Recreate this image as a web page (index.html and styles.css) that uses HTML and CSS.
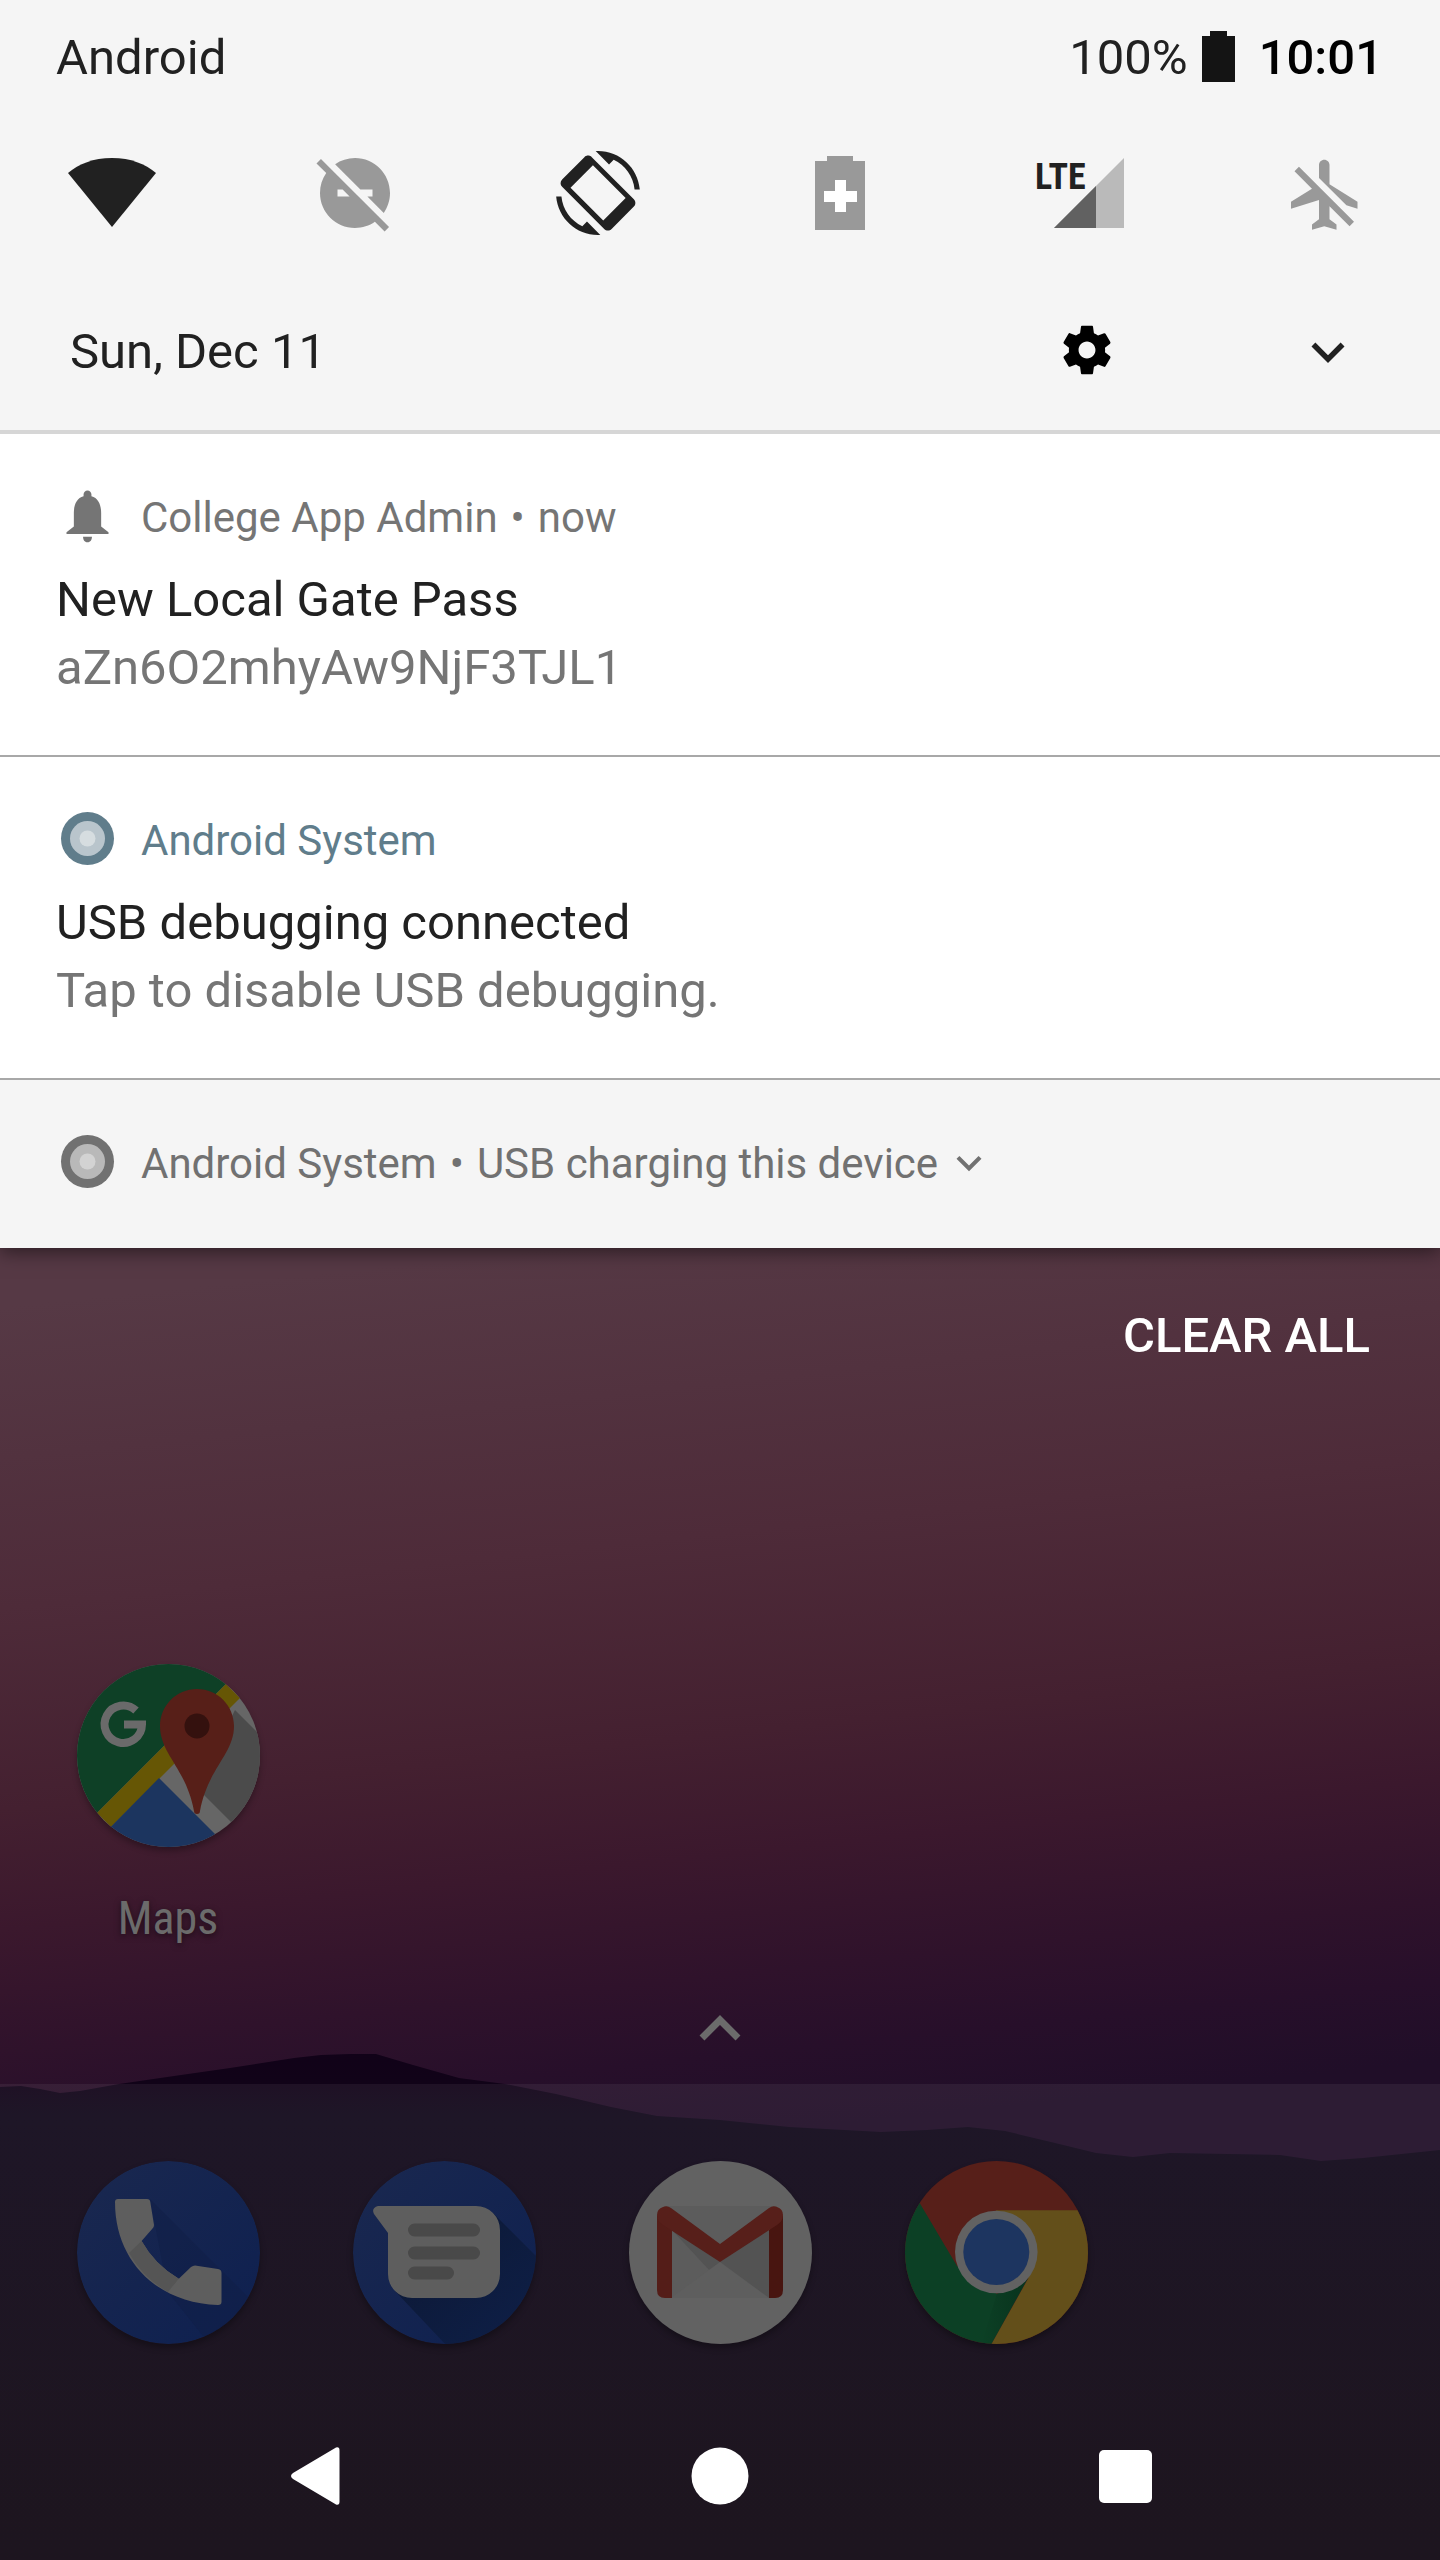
FILE: index.html
```html
<!DOCTYPE html>
<html lang="en">
<head>
<meta charset="utf-8">
<meta name="viewport" content="width=device-width, initial-scale=1">
<title>Notification shade</title>
<link rel="stylesheet" href="styles.css">
</head>
<body>
<div class="screen">
  <header class="shade-header">
    <div class="status-bar">
      <span class="carrier">Android</span>
      <div class="status-right">
        <span>100%</span>
        <svg class="battery" viewBox="0 0 33 51" aria-hidden="true"><path d="M8 0h17v5h8v46H0V5h8z"/></svg>
        <time class="clock">10:01</time>
      </div>
    </div>
    <div class="tiles">
      <button class="tile" aria-label="Wi-Fi"><svg viewBox="0 0 84 84"><path d="M42 76L-2 22C9 13 23 7 42 7s33 6 44 15z"/></svg></button>
      <button class="tile off" aria-label="Do not disturb"><svg viewBox="0 0 24 24"><path d="M17 11v2h-1.46l4.68 4.68C21.34 16.07 22 14.11 22 12c0-5.52-4.48-10-10-10-2.11 0-4.07.66-5.68 1.78L13.54 11H17zM2.27 2.27L1 3.54l2.78 2.78C2.66 7.93 2 9.89 2 12c0 5.52 4.48 10 10 10 2.11 0 4.07-.66 5.68-1.78L20.46 23l1.27-1.27L2.27 2.27zM7 13v-2h1.46l2 2H7z"/></svg></button>
      <button class="tile" aria-label="Auto-rotate"><svg viewBox="0 0 24 24"><path fill-rule="evenodd" d="M16.48 2.52c3.27 1.55 5.61 4.72 5.97 8.48h1.5C23.44 4.84 18.29 0 12 0l-.66.03 3.81 3.81 1.33-1.32zM10.23 1.75c-.59-.59-1.54-.59-2.12 0L1.75 8.11c-.59.59-.59 1.54 0 2.12l12.02 12.02c.59.59 1.54.59 2.12 0l6.36-6.36c.59-.59.59-1.54 0-2.12L10.23 1.75zM13.5 19.85L4.15 10.5l6.4-6.4 9.35 9.35-6.4 6.4zM7.52 21.48C4.25 19.94 1.91 16.76 1.55 13H.05C.56 19.16 5.71 24 12 24l.66-.03-3.81-3.81-1.33 1.32z"/></svg></button>
      <button class="tile off" aria-label="Battery saver"><svg viewBox="0 0 84 84"><path d="M29 5h26v5h12v69H17V10h12z"/><path class="plus" d="M37 29h11v11h11v11H48v10H37V51H26V40h11z"/></svg></button>
      <button class="tile" aria-label="Mobile data"><svg viewBox="0 0 84 84"><path class="signal-back" d="M83 7v70H13z"/><path class="signal" d="M55 35v42H13z"/><text class="lte" x="-6" y="38">LTE</text></svg></button>
      <button class="tile off" aria-label="Airplane mode"><svg viewBox="0 0 24 23"><path d="M13 9V3.5c0-.83-.67-1.5-1.5-1.5S10 2.67 10 3.5v3.68l7.83 7.83L21 16v-2l-8-5zM3 5.27l4.99 4.99L2 14v2l8-2.5V19l-2 1.5V22l3.5-1 3.5 1v-1.5L13 19v-3.73L18.73 21 20 19.73 4.27 4 3 5.27z"/></svg></button>
    </div>
    <div class="date-row">
      <time>Sun, Dec 11</time>
      <div class="date-actions">
        <button class="settings" aria-label="Settings"><svg viewBox="0 0 24 24"><path d="M19.43 12.98c.04-.32.07-.64.07-.98s-.03-.66-.07-.98l2.11-1.65c.19-.15.24-.42.12-.64l-2-3.46c-.12-.22-.39-.3-.61-.22l-2.49 1c-.52-.4-1.08-.73-1.69-.98l-.38-2.65C14.46 2.18 14.25 2 14 2h-4c-.25 0-.46.18-.49.42l-.38 2.65c-.61.25-1.17.59-1.69.98l-2.49-1c-.23-.09-.49 0-.61.22l-2 3.46c-.13.22-.07.49.12.64l2.11 1.65c-.04.32-.07.65-.07.98s.03.66.07.98l-2.11 1.65c-.19.15-.24.42-.12.64l2 3.46c.12.22.39.3.61.22l2.49-1c.52.4 1.08.73 1.69.98l.38 2.65c.03.24.24.42.49.42h4c.25 0 .46-.18.49-.42l.38-2.65c.61-.25 1.17-.59 1.69-.98l2.49 1c.23.09.49 0 .61-.22l2-3.46c.12-.22.07-.49-.12-.64l-2.11-1.65zM12 15.5c-1.93 0-3.5-1.57-3.5-3.5s1.57-3.5 3.5-3.5 3.5 1.57 3.5 3.5-1.57 3.5-3.5 3.5z"/></svg></button>
        <button class="expand" aria-label="Expand quick settings"><svg viewBox="0 0 24 24"><path d="M16.59 8.59L12 13.17 7.41 8.59 6 10l6 6 6-6z"/></svg></button>
      </div>
    </div>
  </header>

  <main class="notifications">
    <article class="notification">
      <div class="note-head">
        <svg class="note-icon" viewBox="0 0 24 24" aria-hidden="true"><path d="M12 22.2c1.2 0 1.6-.9 1.7-2.1h-3.4c.1 1.2.5 2.1 1.7 2.1zM17.2 16.2V11c0-3.07-1.1-5.64-3.7-6.32V4c0-.83-.67-1.5-1.5-1.5s-1.5.67-1.5 1.5v.68C7.9 5.36 6.8 7.92 6.8 11v5.2L4 18.4V19h16v-.6z"/></svg>
        <span>College App Admin</span><span class="dot">•</span><span>now</span>
      </div>
      <h2>New Local Gate Pass</h2>
      <p>aZn6O2mhyAw9NjF3TJL1</p>
    </article>
    <article class="notification system">
      <div class="note-head">
        <svg class="note-icon" viewBox="0 0 63 63" aria-hidden="true"><circle cx="31.5" cy="31.5" r="26.5"/><circle class="ring" cx="31.5" cy="31.5" r="17.5"/><circle class="core" cx="31.5" cy="31.5" r="8"/></svg>
        <span>Android System</span>
      </div>
      <h2>USB debugging connected</h2>
      <p>Tap to disable USB debugging.</p>
    </article>
    <article class="notification quiet">
      <div class="note-head">
        <svg class="note-icon" viewBox="0 0 63 63" aria-hidden="true"><circle cx="31.5" cy="31.5" r="26.5"/><circle class="ring" cx="31.5" cy="31.5" r="17.5"/><circle class="core" cx="31.5" cy="31.5" r="8"/></svg>
        <span>Android System</span><span class="dot">•</span><span>USB charging this device</span>
        <button class="more" aria-label="Expand notification"><svg viewBox="0 0 24 24"><path d="M16.59 8.59L12 13.17 7.41 8.59 6 10l6 6 6-6z"/></svg></button>
      </div>
    </article>
  </main>

  <div class="clear-row"><button class="clear-all">CLEAR ALL</button></div>

  <section class="workspace">
    <a class="app" href="#maps">
      <svg class="app-icon" viewBox="0 0 183 183" aria-hidden="true">
        <clipPath id="disc"><circle cx="91.5" cy="91.5" r="91.5"/></clipPath>
        <g clip-path="url(#disc)">
          <rect width="183" height="183" fill="#666"/>
          <path fill="#0e4026" d="M0 0h169L0 169z"/>
          <path fill="#4b4b4b" d="M158 46l30 30v116L120 124z"/>
          <path fill="#665605" d="M149 20l14 14L34 163l-14-14z"/>
          <path fill="#1c355f" d="M82 114l70 70H13z"/>
          <path fill="#571f18" d="M120 25c-21 0-37 17-37 37 0 28 26 42 34 85q0 3 3 3t3-3c8-43 34-57 34-85 0-20-16-37-37-37z"/>
          <circle cx="120" cy="62" r="12.5" fill="#34110e"/>
          <path fill="none" stroke="#6a6a6a" stroke-width="8" d="M59 46.500A18.700 18.700 0 1 0 65 60.500H47"/>
        </g>
      </svg>
      <span class="app-label">Maps</span>
    </a>
  </section>
  <svg class="drawer-handle" viewBox="0 0 48 48" aria-hidden="true"><path d="M6 34l18-18 18 18"/></svg>

  <footer class="bottom">
    <svg class="ridge" viewBox="0 0 1440 507" preserveAspectRatio="none" aria-hidden="true">
      <defs><linearGradient id="slope" x1="0" y1="0" x2="0" y2="1"><stop offset="0" stop-color="#110218"/><stop offset=".06" stop-color="#110318"/><stop offset=".12" stop-color="#10081a"/><stop offset="1" stop-color="#0f0711"/></linearGradient></defs>
      <path fill="url(#slope)" d="M0 34L21 33 40 36 60 40 80 38 119 31 174 23 230 15 294 5 321 2 350 1 376 1 413 12 459 25 505 31 556 41 611 54 657 63 720 67 789 74 881 79 927 77 968 74 1005 78 1055 90 1096 100 1133 104 1170 100 1280 102 1321 108 1363 105 1440 97V507H0z"/>
    </svg>
    <div class="dock">
      <a class="app" href="#phone" aria-label="Phone">
        <svg class="app-icon" viewBox="0 0 183 183" aria-hidden="true">
          <defs><linearGradient id="blue" x1="0" y1="0" x2="1" y2="1"><stop offset="0" stop-color="#1a284f"/><stop offset="1" stop-color="#0e2050"/></linearGradient>
          <linearGradient id="cast" x1="0" y1="0" x2="1" y2="1"><stop offset=".3" stop-color="#0b1835"/><stop offset="1" stop-color="#0f2049"/></linearGradient></defs>
          <g clip-path="url(#disc)">
            <circle cx="91.5" cy="91.5" r="91.5" fill="url(#blue)"/>
            <path fill="#0f1e45" opacity=".5" d="M73 38L200 165v40h-50L91 131z"/>
            <path fill="#5e5e5e" d="M41 38h29q3 0 3.300 3L77 64q0 2-1.500 3.500L64.600 80Q78 104 101.800 117.700L114 106q2-1.500 4-1.500l23 3.500q3.500.5 3.500 4v29q0 3-3.500 3C80 142 38 100 38 41q0-3 3-3z"/>
            <path fill="#555" d="M64.600 80Q78 104 101.800 117.700L91 131Q66 117 52 92z"/>
          </g>
        </svg>
      </a>
      <a class="app" href="#messages" aria-label="Messages">
        <svg class="app-icon" viewBox="0 0 183 183" aria-hidden="true">
          <g clip-path="url(#disc)">
            <circle cx="91.5" cy="91.5" r="91.5" fill="url(#blue)"/>
            <path fill="url(#cast)" opacity=".8" d="M140 52l60 60v90h-90L42 130z"/>
            <path fill="#5e5e5e" d="M25 45h98a24 24 0 0 1 24 24v44a24 24 0 0 1-24 24H59a24 24 0 0 1-24-24V72L21 53q-3-6 4-8z"/>
            <path stroke="#494949" stroke-width="13" stroke-linecap="round" d="M61.500 69H120.500M61.500 92H120.500M61.500 112H94.500"/>
          </g>
        </svg>
      </a>
      <a class="app" href="#gmail" aria-label="Gmail">
        <svg class="app-icon" viewBox="0 0 183 183" aria-hidden="true">
          <circle cx="91.5" cy="91.5" r="91.5" fill="#626262"/>
          <path fill="#5c5c5c" d="M35 45h113v92H35z"/>
          <path fill="#535353" d="M42 68l49 33 49-33v69h-34z"/>
          <path fill="#5e5e5e" d="M42 137l38-28 11-8 49 36z"/>
          <path fill="#541d18" d="M28 54v75q0 8 8 8h7V69z"/>
          <path fill="#481510" d="M154 54v75q0 8-8 8h-6V69z"/>
          <path fill="#571f1a" d="M42 47L91 83l49-36q4-3 8-1 6 2 6 8 0 6-6 10L91 101 34 64q-6-4-6-10 0-6 6-8 4-2 8 1z"/>
        </svg>
      </a>
      <a class="app" href="#chrome" aria-label="Chrome">
        <svg class="app-icon" viewBox="0 0 183 183" aria-hidden="true">
          <defs><linearGradient id="fold" x1="0" y1="0" x2="1" y2="0"><stop offset="0" stop-color="#08331d" stop-opacity="0"/><stop offset="1" stop-color="#08331d"/></linearGradient></defs>
          <g clip-path="url(#disc)">
            <rect width="183" height="183" fill="#571f19"/>
            <path fill="#0c4025" d="M14.500 41.700L52 105l40 28 31-16-36.500 66H-10V20z"/>
            <path fill="#634f1a" d="M91 49.300h92V183H86.500l37-66z"/>
            <path fill="url(#fold)" d="M92 132l31-15-36.500 66h-10z"/>
          </g>
          <circle cx="91.300" cy="91" r="41.300" fill="#626262"/>
          <circle cx="91.300" cy="91" r="33" fill="#1d3560"/>
        </svg>
      </a>
    </div>
    <nav class="nav-bar">
      <button aria-label="Back"><svg viewBox="0 0 58 58"><path d="M50 .5q3.500-1 3.500 3v51q0 4-3.500 3L7 32q-4-3 0-6z"/></svg></button>
      <button aria-label="Home"><svg viewBox="0 0 58 58"><circle cx="29" cy="29" r="28.5"/></svg></button>
      <button aria-label="Recent apps"><svg viewBox="0 0 58 58"><rect x="3" y="3" width="53" height="53" rx="5"/></svg></button>
    </nav>
  </footer>
</div>
</body>
</html>
```
FILE: styles.css
```css
* { box-sizing: border-box; }
body { margin: 0; font-family: Roboto, sans-serif; font-size: 49px; line-height: 60px; color: #212121; }
button { display: block; padding: 0; border: 0; background: none; color: inherit; font: inherit; cursor: pointer; }
a { color: inherit; text-decoration: none; }
svg { display: block; overflow: visible; }
h2, p { margin: 0; font-size: 49px; font-weight: 400; line-height: 68px; }

.screen {
  display: flex;
  flex-direction: column;
  min-height: 100vh;
  background: linear-gradient(174deg, #563945 1300px, #4e2b39 1600px, #442030 1800px, #3b182d 1920px, #2f122b 2040px, #270f2a 2120px, #200e28 2200px);
}

.shade-header { position: relative; background: #f5f5f5; border-bottom: 4px solid #d6d6d6; padding: 28px 0 42px; }
.status-bar, .status-right, .tiles, .date-row, .date-actions, .note-head { display: flex; align-items: center; }
.status-bar { justify-content: space-between; padding: 0 57px 0 56px; }
.battery { width: 33px; height: 51px; margin: 0 24px 4px 14px; fill: #141414; }
.clock { color: #000; font-weight: 500; }

.tiles { justify-content: space-between; padding: 0 72px 0 70px; margin-top: 63px; }
.tile svg { width: 84px; height: 84px; fill: #212121; }
.tile.off svg { fill: #999; }
.tile .plus { fill: #fff; }
.tile .signal-back { fill: #bababa; }
.tile .signal { fill: #616161; }
.lte { font-family: "Roboto Condensed", "Liberation Sans Narrow", Roboto, sans-serif; font-size: 36px; font-weight: 700; }

.date-row { justify-content: space-between; height: 72px; margin-top: 81px; padding: 0 79px 0 70px; }
.date-actions { gap: 179px; }
.settings svg { width: 58px; height: 58px; margin-bottom: 4px; fill: #000; }
.expand svg { width: 66px; height: 66px; fill: #212121; }

.notifications { box-shadow: 0 4px 18px rgba(0, 0, 0, .5); }
.notification { padding: 50px 56px 53px; background: #fff; }
.notification + .notification { border-top: 2px solid #a8a8a8; }
.notification p { color: #757575; }
.note-head { align-items: flex-start; margin-bottom: 15px; font-size: 42px; line-height: 67px; color: #757575; }
.note-icon { width: 63px; height: 63px; margin-right: 22px; fill: currentColor; }
.dot { margin: 0 13px; }
.system .note-head { color: #607d8b; }
.system .ring { fill: #b9c5cc; }
.system .core { fill: #d6dde0; }
.quiet { padding-bottom: 51px; background: #f5f5f5; }
.quiet .note-head { margin: 0; color: #717171; }
.quiet .ring { fill: #b9b9b9; }
.quiet .core { fill: #d3d3d3; }
.more svg { width: 50px; height: 50px; margin: 8px 6px; fill: #717171; }

.clear-row { display: flex; justify-content: flex-end; padding: 58px 70px 0; }
.clear-all { color: #fff; font-weight: 500; }

.workspace, .dock { display: grid; grid-template-columns: repeat(5, 1fr); padding: 0 30px; }
.workspace { margin-top: auto; }
.app { display: flex; flex-direction: column; align-items: center; gap: 44px; }
.app-icon { width: 183px; height: 183px; border-radius: 50%; box-shadow: 0 4px 6px rgba(0, 0, 0, .3); }
.app-label { font-family: "Roboto Condensed", Roboto, sans-serif; font-size: 46px; line-height: 54px; color: #6b6b6b; text-shadow: 0 2px 6px rgba(0, 0, 0, .5); }
.drawer-handle { align-self: center; width: 48px; height: 48px; margin: 59px 0 32px; fill: none; stroke: #6b6b6b; stroke-width: 7px; }

.bottom { position: relative; }
.dock { position: relative; padding-top: 77px; padding-bottom: 48px; background: rgba(255, 255, 255, .06); }
.ridge { position: absolute; bottom: 0; left: 0; width: 100%; height: 507px; }
.nav-bar { position: relative; display: grid; grid-template-columns: repeat(3, 1fr); place-items: center; height: 168px; padding: 0 112px; background: rgba(255, 255, 255, .06); }
.nav-bar svg { width: 58px; height: 58px; fill: #fff; }
```
